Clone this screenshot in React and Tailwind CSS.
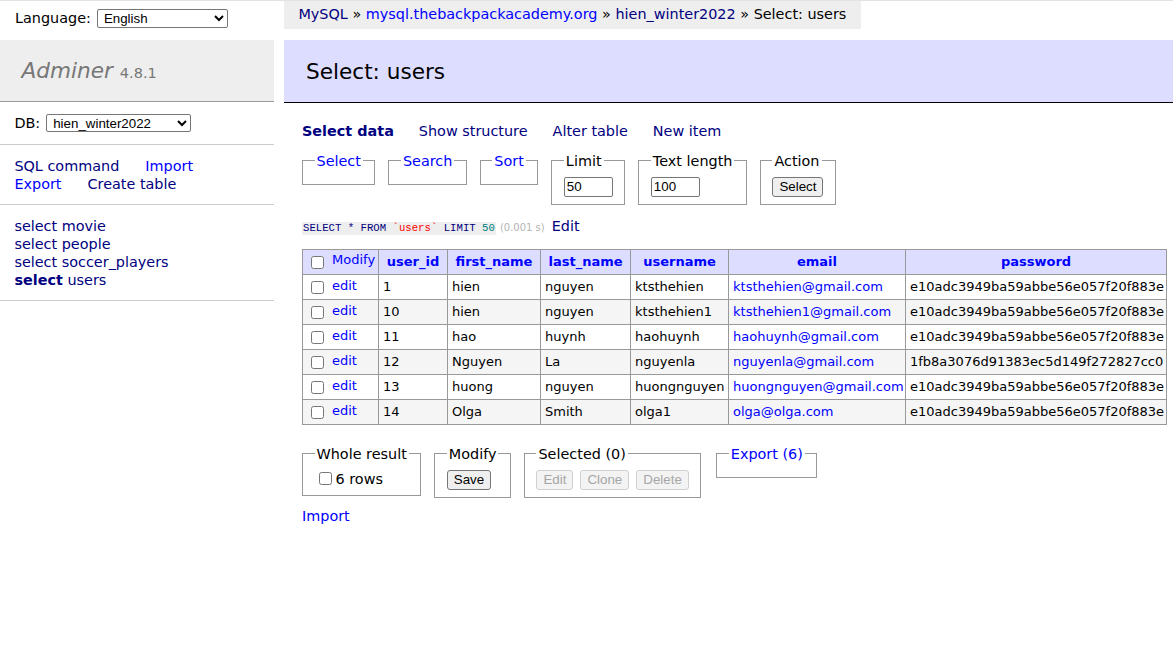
const navy = "text-[#000080]";
const blue = "text-[#0000ff]";

const hash = "e10adc3949ba59abbe56e057f20f883e";
const rows = [
  ["1", "hien", "nguyen", "ktsthehien", "ktsthehien@gmail.com", hash],
  ["10", "hien", "nguyen", "ktsthehien1", "ktsthehien1@gmail.com", hash],
  ["11", "hao", "huynh", "haohuynh", "haohuynh@gmail.com", hash],
  ["12", "Nguyen", "La", "nguyenla", "nguyenla@gmail.com", "1fb8a3076d91383ec5d149f272827cc0"],
  ["13", "huong", "nguyen", "huongnguyen", "huongnguyen@gmail.com", hash],
  ["14", "Olga", "Smith", "olga1", "olga@olga.com", hash],
];

const cols = ["user_id", "first_name", "last_name", "username", "email", "password"];
const widths = [76, 69, 93, 90, 98, 177, 261];

function Btn({ children, disabled }) {
  return (
    <button
      disabled={disabled}
      className={`h-[20px] px-[6px] rounded-[3px] border text-[13.33px] leading-[16px] font-['Liberation_Sans',Arial,sans-serif] ${
        disabled ? "bg-[#f3f3f3] border-[#cfcfcf] text-[#a6a6a6]" : "bg-[#efefef] border-[#767676] text-black"
      }`}
    >
      {children}
    </button>
  );
}

function Box({ legend, children }) {
  return (
    <fieldset className="border border-[#999] px-[11.5px] pt-[7px] pb-[7px]">
      <legend className="px-[2px] leading-[18px]">{legend}</legend>
      {children}
    </fieldset>
  );
}

function Check({ className = "" }) {
  return <input type="checkbox" className={`m-0 w-[13px] h-[13px] align-middle ${className}`} />;
}

function Field({ value }) {
  return (
    <input
      defaultValue={value}
      className="block w-[49px] h-[20px] px-[2px] border border-[#767676] rounded-[2px] bg-white text-[13.33px] font-['Liberation_Sans',Arial,sans-serif]"
    />
  );
}

function Sidebar() {
  return (
    <div className="w-[274px] shrink-0">
      <div className="h-[39px] pb-[5px] px-[15px] flex items-center gap-[6px]">
        <span>Language:</span>
        <select className="w-[131px] h-[19px] border border-[#767676] rounded-[2px] bg-white text-[13.33px] leading-[15px] font-['Liberation_Sans',Arial,sans-serif] pl-[2px]">
          <option>English</option>
        </select>
      </div>
      <h1 className="bg-[#eee] border-b border-[#999] px-[21.6px] py-[17.3px] h-[62px] text-[21.6px] leading-[27px] text-[#777] whitespace-nowrap">
        <span className="italic">Adminer</span> <span className="text-[14.5px] leading-none">4.8.1</span>
      </h1>
      <div className="border-b border-[#ccc] px-[14.4px] h-[43px] flex items-center gap-[6px]">
        <span>DB:</span>
        <select className="w-[145px] h-[18px] border border-[#767676] rounded-[2px] bg-white text-[13.33px] leading-[14px] font-['Liberation_Sans',Arial,sans-serif] pl-[2px]">
          <option>hien_winter2022</option>
        </select>
      </div>
      <div className="border-b border-[#ccc] px-[14.4px] py-[11.5px]">
        <div>
          <a className={`${navy} mr-[26px]`}>SQL command</a>
          <a className={blue}>Import</a>
        </div>
        <div>
          <a className={`${blue} mr-[26px]`}>Export</a>
          <a className={navy}>Create table</a>
        </div>
      </div>
      <ul className="border-b border-[#ccc] px-[14.4px] py-[11.5px]">
        {["movie", "people", "soccer_players", "users"].map((t) => (
          <li key={t} className={navy}>
            <a className={t === "users" ? "font-bold" : ""}>select</a> <a>{t}</a>
          </li>
        ))}
      </ul>
    </div>
  );
}

function ResultTable() {
  return (
    <table className="mt-[12px] border-collapse table-fixed w-[864px] text-[13px] leading-[16px]">
      <colgroup>
        {widths.map((w, i) => (
          <col key={i} style={{ width: w }} />
        ))}
      </colgroup>
      <thead>
        <tr className="h-[25px] bg-[#ddf]">
          <td className="border border-[#999] px-[4px] whitespace-nowrap">
            <Check className="ml-[4px]" />
            <a className={`${blue} ml-[8px] relative top-[-2px]`}>Modify</a>
          </td>
          {cols.map((c) => (
            <th key={c} className="border border-[#999] px-[4px] text-center font-bold whitespace-nowrap">
              <a className={blue}>{c}</a>
            </th>
          ))}
        </tr>
      </thead>
      <tbody>
        {rows.map((r, i) => (
          <tr key={r[0]} className={`h-[25px] ${i % 2 ? "bg-[#f5f5f5]" : "bg-white"}`}>
            <td className="border border-[#999] px-[4px] whitespace-nowrap">
              <Check className="ml-[4px]" />
              <a className={`${blue} ml-[8px] relative top-[-1px]`}>edit</a>
            </td>
            {r.map((v, j) => (
              <td key={j} className="border border-[#999] px-[4px] pt-[1px] whitespace-nowrap overflow-hidden">
                {j === 4 ? <a className={blue}>{v}</a> : v}
              </td>
            ))}
          </tr>
        ))}
      </tbody>
    </table>
  );
}

export default function App() {
  return (
    <div className="min-h-[653px] bg-white border-t border-[#e2e2e2] flex text-black text-[14.4px] leading-[18px] font-['DejaVu_Sans',Verdana,sans-serif]">
      <Sidebar />
      <div className="flex-1 ml-[10px] flex flex-col min-w-0">
        <div className="self-start bg-[#eee] h-[28px] leading-[26px] px-[14.4px] whitespace-nowrap">
          <a className={navy}>MySQL</a> » <a className={blue}>mysql.thebackpackacademy.org</a> »{" "}
          <a className={navy}>hien_winter2022</a> » Select: users
        </div>
        <h2 className="mt-[11px] bg-[#ddf] border-b border-black pl-[22px] pr-[20px] pt-[18px] pb-[16.6px] text-[21.6px] leading-[27px] font-normal">
          Select: users
        </h2>
        <div className="pl-[18px]">
          <p className="mt-[19px]">
            <a className={`${navy} font-bold mr-[25px]`}>Select data</a>
            <a className={`${navy} mr-[25px]`}>Show structure</a>
            <a className={`${navy} mr-[25px]`}>Alter table</a>
            <a className={navy}>New item</a>
          </p>
          <div className="mt-[12px] flex items-start gap-[13px]">
            <Box legend={<a className={blue}>Select</a>} />
            <Box legend={<a className={blue}>Search</a>} />
            <Box legend={<a className={blue}>Sort</a>} />
            <Box legend="Limit">
              <Field value="50" />
            </Box>
            <Box legend="Text length">
              <Field value="100" />
            </Box>
            <Box legend="Action">
              <Btn>Select</Btn>
            </Box>
          </div>
          <p className="mt-[12px] flex items-baseline">
            <code className="bg-[#eee] text-[10.67px] leading-[13px] font-['Liberation_Mono','DejaVu_Sans_Mono',monospace] text-[#000080] px-[1px]">
              SELECT * FROM <span className="text-[#ff0000]">`users`</span> LIMIT{" "}
              <span className="text-[#008080]">50</span>
            </code>
            <span className="ml-[4px] text-[10px] text-[#b5b5b5]">(0.001 s)</span>
            <a className={`${navy} ml-[7px]`}>Edit</a>
          </p>
          <ResultTable />
          <div className="mt-[20px] flex items-start gap-[13px]">
            <Box legend="Whole result">
              <label className="flex items-center">
                <Check className="ml-[4px] mr-[4px]" />
                <span>6 rows</span>
              </label>
            </Box>
            <Box legend="Modify">
              <Btn>Save</Btn>
            </Box>
            <Box legend="Selected (0)">
              <div className="flex gap-[7px]">
                <Btn disabled>Edit</Btn>
                <Btn disabled>Clone</Btn>
                <Btn disabled>Delete</Btn>
              </div>
            </Box>
            <div className="ml-[2px]">
              <Box legend={<a className={blue}>Export (6)</a>} />
            </div>
          </div>
          <p className="mt-[9px]">
            <a className={blue}>Import</a>
          </p>
        </div>
      </div>
    </div>
  );
}
